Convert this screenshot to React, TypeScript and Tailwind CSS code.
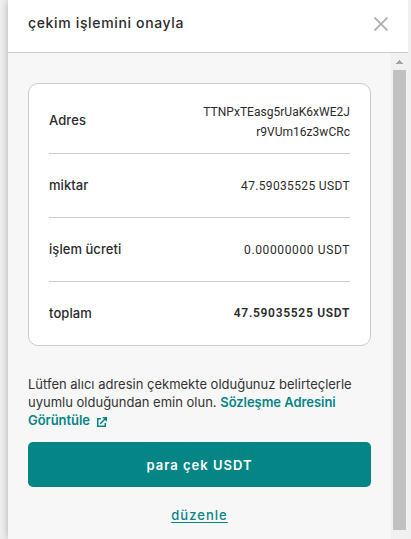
import React from 'react';

const rows = [
  { label: 'miktar', value: '47.59035525 USDT', valueClass: 'tracking-[0.35px]' },
  { label: 'işlem ücreti', value: '0.00000000 USDT', valueClass: 'tracking-[0.62px]' },
];

const CloseIcon = () => (
  <svg width="14" height="14" viewBox="0 0 14 14" fill="none" stroke="#adadad" strokeWidth="1.8">
    <path d="M0.5 0.5L13.5 13.5M13.5 0.5L0.5 13.5" />
  </svg>
);

const ExternalIcon = () => (
  <svg className="inline-block ml-[7px] align-[-2px]" width="10" height="10" viewBox="0 0 10 10" fill="none" stroke="#058585" strokeWidth="1.5">
    <path d="M4 1.75H0.75V9.25H8.25V6M3.2 6.8L9 1M5.7 0.75H9.25V4.3" />
  </svg>
);

const Scrollbar = () => (
  <div className="w-[17px] shrink-0 bg-[#f1f1f1] flex flex-col items-center">
    <div className="h-[17px] flex items-center justify-center">
      <svg width="7" height="4" viewBox="0 0 7 4" fill="#a3a3a3" shapeRendering="crispEdges">
        <path d="M3 0h1v1h1v1h1v1h1v1H0V3h1V2h1V1h1z" />
      </svg>
    </div>
    <div className="w-[13px] h-[460px] bg-[#c1c1c1]" />
  </div>
);

export default function App() {
  return (
    <div className="w-[411px] h-[539px] overflow-hidden bg-[#f0f0f0] pl-2 font-[Inter,'Noto_Sans',sans-serif] text-[#2b2b2b]">
      <div className="w-[400px] h-full flex flex-col bg-white shadow-[0_0_8px_rgba(0,0,0,0.28)] [clip-path:inset(0_0_0_-8px)]">
        <header className="h-[53px] shrink-0 border-b border-[#cccccc] pl-5 pr-5 flex items-center justify-between">
          <h1 className="text-[14px] font-medium leading-5 tracking-[0.65px] -mt-[6px]">çekim işlemini onayla</h1>
          <button aria-label="Kapat" className="-mt-[5px]">
            <CloseIcon />
          </button>
        </header>

        <div className="flex flex-1 min-h-0">
          <main className="w-[383px] bg-[#f7f7f7] px-5 pt-[30px]">
            <section className="h-[263px] bg-white border border-[#cccccc] rounded-[10px] px-5 text-[13px]">
              <div className="h-[70px] flex items-center justify-between border-b border-[#cccccc]">
                <span className="font-medium mt-1 tracking-[0.1px]">Adres</span>
                <span className="mt-[7px] text-right font-[Roboto,sans-serif] text-[12px] leading-5 tracking-[0.03px]">
                  TTNPxTEasg5rUaK6xWE2J
                  <br />
                  r9VUm16z3wCRc
                </span>
              </div>
              {rows.map(({ label, value, valueClass }) => (
                <div key={label} className="h-16 flex items-center justify-between border-b border-[#cccccc]">
                  <span className="font-medium tracking-[0.05px]">{label}</span>
                  <span className={`font-[Roboto,sans-serif] text-[12px] ${valueClass}`}>{value}</span>
                </div>
              ))}
              <div className="h-[63px] flex items-center justify-between">
                <span className="font-medium tracking-[0.1px]">toplam</span>
                <span className="font-[Roboto,sans-serif] text-[12px] -mt-0.5 font-semibold tracking-[0.7px]">47.59035525 USDT</span>
              </div>
            </section>

            <p className="mt-[29px] text-[13px] leading-[18px] whitespace-nowrap text-[#333333]">
              Lütfen alıcı adresin çekmekte olduğunuz belirteçlerle
              <br />
              uyumlu olduğundan emin olun.{' '}
              <a className="font-semibold tracking-[-0.05px] text-[#058585]">
                Sözleşme Adresini
                <br />
                Görüntüle
                <ExternalIcon />
              </a>
            </p>

            <button className="mt-[13px] w-full h-[45px] pt-0.5 rounded-[5px] bg-[#058585] text-white text-[13px] font-semibold tracking-[1px]">
              para çek USDT
            </button>
            <div className="mt-[15px] text-center">
              <a className="text-[13px] font-medium leading-5 tracking-[1.05px] text-[#058585] underline underline-offset-2">düzenle</a>
            </div>
          </main>
          <Scrollbar />
        </div>
      </div>
    </div>
  );
}
